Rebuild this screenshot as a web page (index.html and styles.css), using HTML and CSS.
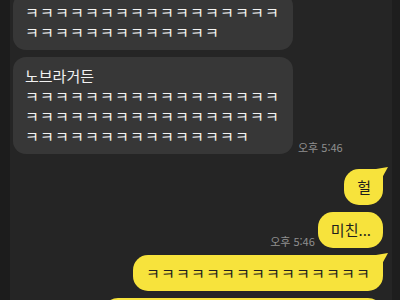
FILE: index.html
```html
<!DOCTYPE html>
<html lang="ko">
<head>
    <meta charset="UTF-8">
    <meta name="viewport" content="width=device-width, initial-scale=1.0">
    <title>채팅</title>
    <link rel="stylesheet" href="styles.css">
</head>
<body>

<div class="screen">
    <div class="edge-left"></div>

    <!-- Chat messages -->
    <div class="chat">
        <div class="row left">
            <div class="bubble dark"><span class="kk">ㅋㅋㅋㅋㅋㅋㅋㅋㅋㅋㅋㅋㅋㅋㅋㅋㅋ<br>ㅋㅋㅋㅋㅋㅋㅋㅋㅋㅋㅋㅋㅋ</span></div>
        </div>
        <div class="row left">
            <div class="bubble dark">노브라거든<br><span class="kk">ㅋㅋㅋㅋㅋㅋㅋㅋㅋㅋㅋㅋㅋㅋㅋㅋㅋ<br>ㅋㅋㅋㅋㅋㅋㅋㅋㅋㅋㅋㅋㅋㅋㅋㅋㅋ<br>ㅋㅋㅋㅋㅋㅋㅋㅋㅋㅋㅋㅋㅋㅋㅋ</span></div>
            <span class="time">오후 5:46</span>
        </div>

        <div class="row right first">
            <div class="bubble yellow tail">헐</div>
        </div>
        <div class="row right">
            <span class="time">오후 5:46</span>
            <div class="bubble yellow">미친...</div>
        </div>
        <div class="row right">
            <div class="bubble yellow tail"><span class="kk">ㅋㅋㅋㅋㅋㅋㅋㅋㅋㅋㅋㅋㅋㅋㅋ</span></div>
        </div>
        <div class="row right">
            <div class="bubble yellow wide"><span class="kk">ㅋㅋㅋㅋㅋㅋㅋㅋㅋㅋㅋㅋㅋㅋㅋㅋㅋ</span></div>
        </div>
    </div>

    <div class="edge-right"></div>
</div>

</body>
</html>
```

FILE: styles.css
```css
body {
    margin: 0;
    padding: 0;
    background-color: #252525;
    font-family: "Noto Sans CJK KR", "Noto Sans", sans-serif;
    overflow: hidden;
}
.screen {
    display: flex;
    height: 300px;
    overflow: hidden;
}
.edge-left {
    width: 10px;
    flex-shrink: 0;
    background-color: #1c1c1c;
}
.edge-right {
    width: 8px;
    flex-shrink: 0;
    background-color: #1e1e1e;
}
.chat {
    flex: 1;
    display: flex;
    flex-direction: column;
    gap: 7px;
    margin-top: -7px;
    padding: 0 9px 0 3px;
}
.row {
    display: flex;
    align-items: flex-end;
    gap: 5px;
}
.row.right {
    justify-content: flex-end;
    gap: 3px;
}
.row.first {
    margin-top: 8px;
}
.bubble {
    font-size: 15px;
    line-height: 20px;
    position: relative;
    white-space: nowrap;
}
.kk {
    letter-spacing: 1.2px;
}
.bubble.dark {
    width: 256px;
    padding: 9px 12px 8px;
    background-color: #373737;
    color: #f2f2f2;
    border-radius: 13px;
}
.bubble.yellow {
    padding: 8px 12px 8px 13px;
    background-color: #f7e33c;
    color: #1e1e1e;
    border-radius: 15px;
}
.bubble.tail {
    border-top-right-radius: 4px;
}
.bubble.tail::after {
    content: "";
    position: absolute;
    top: -2px;
    right: -5px;
    width: 12px;
    height: 12px;
    background-color: #f7e33c;
    clip-path: polygon(0 2px, 100% 0, 45% 100%, 0 100%);
}
.time {
    font-size: 11px;
    line-height: 14px;
    color: #8f8f8f;
    white-space: nowrap;
}
```
